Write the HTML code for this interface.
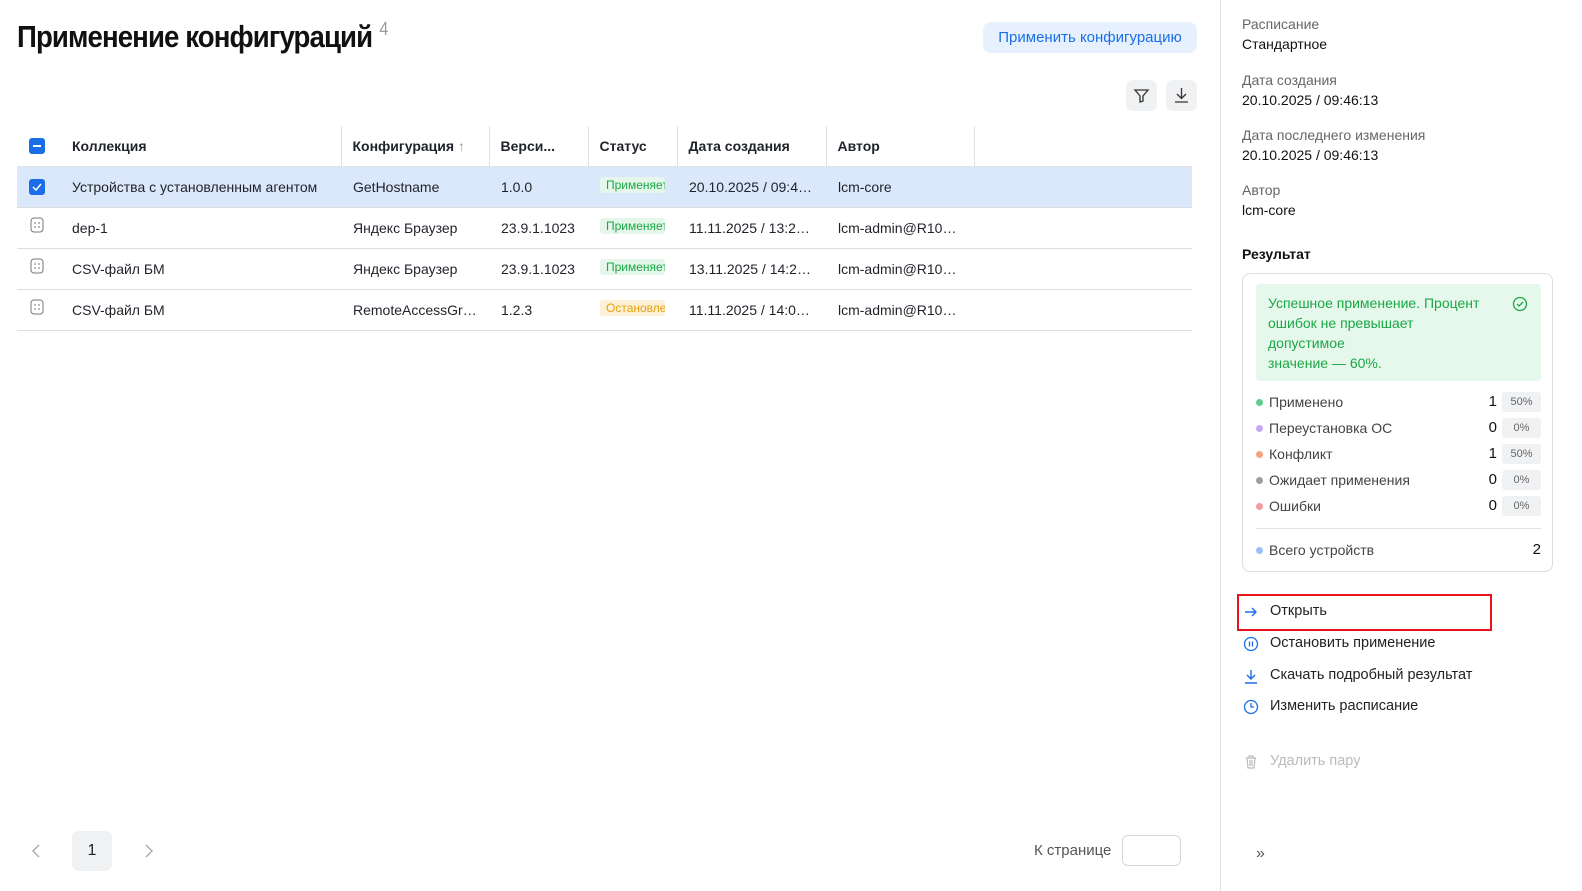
<!DOCTYPE html>
<html><head><meta charset="utf-8"><style>
*{box-sizing:border-box;margin:0;padding:0}
html{overflow:hidden;width:1582px;height:891px}
body{width:1582px;height:891px;overflow:hidden;background:#fff;font-family:"Liberation Sans","Noto Sans CJK SC",sans-serif;color:#1f2329;position:relative}
.abs{position:absolute}
h1{position:absolute;left:17px;top:19px;font-size:31px;font-weight:bold;letter-spacing:-1px;color:#111;transform:scaleX(0.89);transform-origin:left top;white-space:nowrap}
h1 sup{font-size:18px;color:#999;font-weight:normal;vertical-align:top;position:relative;top:0px;margin-left:8px}
.btn{position:absolute;left:983px;top:22px;width:214px;height:31px;background:#e7f1fd;border-radius:8px;color:#1a6ee8;font-size:15px;text-align:center;line-height:31px}
.ib{position:absolute;top:80px;width:31px;height:31px;background:#f0f1f3;border-radius:7px}
table{position:absolute;left:17px;top:126px;width:1175px;border-collapse:collapse;font-size:14px;table-layout:fixed}
td{height:41px;border-bottom:1px solid #dcdde0;white-space:nowrap;overflow:hidden;padding:0 0 0 12px}
tr.h td{height:40px;font-weight:bold;border-bottom:1px solid #e4e5e8}
tr.sel td{background:#dbe7fb}
.sep{border-left:1px solid #e0e0e0;padding-left:11px}
.cb{width:16px;height:16px;border-radius:3px;background:#1a6ee8;display:inline-block;vertical-align:middle;position:relative}
.tag{display:inline-block;width:65px;overflow:hidden;font-size:12px;padding:1px 0 1px 6px;border-radius:3px;white-space:nowrap}
.g{background:#e5f6ea;color:#1aa845}.o{background:#fdf1d8;color:#e5a10f}
.side{position:absolute;left:1220px;top:0;width:362px;height:891px;border-left:1px solid #e0e1e4}
.lab{position:absolute;left:21px;font-size:14px;color:#666}
.val{position:absolute;left:21px;font-size:14px;color:#111}
.card{position:absolute;left:21px;top:273px;width:311px;height:299px;border:1px solid #dcdde0;border-radius:8px}
.ok{position:absolute;left:13px;top:10px;width:285px;height:97px;background:#e6f7ec;border-radius:4px;color:#1aa845;font-size:14px;line-height:20px;padding:9px 12px;white-space:nowrap;overflow:hidden}
.row{position:absolute;left:13px;width:285px;height:20px;font-size:14px;color:#444;line-height:20px}
.row i{display:inline-block;width:7px;height:7px;border-radius:50%;margin-right:6px;vertical-align:1px}
.row b{position:absolute;right:44px;font-weight:normal;color:#111;font-size:15px}
.row em{position:absolute;right:0;top:0;width:39px;height:20px;background:#f0f1f3;border-radius:3px;font-style:normal;font-size:11px;text-align:center;color:#666}
.act{position:absolute;left:49px;font-size:14.5px;color:#222}
</style></head><body>
<h1>Применение конфигураций<sup>4</sup></h1>
<div class="btn">Применить конфигурацию</div>
<div class="ib" style="left:1126px"><svg width="31" height="31"><path d="M9 10h13l-5 6v5l-3 1v-6z" fill="none" stroke="#333" stroke-width="1.3"/></svg></div>
<div class="ib" style="left:1166px"><svg width="31" height="31"><path d="M15.5 8v10M11 14l4.5 4.5L20 14M9 22h13" fill="none" stroke="#333" stroke-width="1.3"/></svg></div>
<table>
<colgroup><col style="width:43px"><col style="width:281px"><col style="width:148px"><col style="width:99px"><col style="width:89px"><col style="width:149px"><col style="width:148px"><col></colgroup>
<tr class="h"><td><span class="cb"><span class="abs" style="left:4px;top:7px;width:8px;height:2px;background:#fff"></span></span></td><td>Коллекция</td><td class="sep">Конфигурация <span style="color:#999;font-weight:normal">↑</span></td><td class="sep">Верси...</td><td class="sep">Статус</td><td class="sep">Дата создания</td><td class="sep">Автор</td><td class="sep"></td></tr>
<tr class="sel"><td><span class="cb"><svg class="abs" style="left:0;top:0" width="16" height="16"><path d="M4 8l3 3 5-6" stroke="#fff" fill="none" stroke-width="1.5"/></svg></span></td><td>Устройства с установленным агентом</td><td>GetHostname</td><td>1.0.0</td><td><span class="tag g">Применяется</span></td><td>20.10.2025 / 09:4…</td><td>lcm-core</td><td></td></tr>
<tr><td><svg width="16" height="16" style="vertical-align:middle;margin-top:-8px"><rect x="2" y="1" width="12" height="14" rx="3" fill="none" stroke="#777"/><path d="M5 6h2M9 6h2M5 10h2M9 10h2" stroke="#777"/></svg></td><td>dep-1</td><td>Яндекс Браузер</td><td>23.9.1.1023</td><td><span class="tag g">Применяется</span></td><td>11.11.2025 / 13:2…</td><td>lcm-admin@R10…</td><td></td></tr>
<tr><td><svg width="16" height="16" style="vertical-align:middle;margin-top:-8px"><rect x="2" y="1" width="12" height="14" rx="3" fill="none" stroke="#777"/><path d="M5 6h2M9 6h2M5 10h2M9 10h2" stroke="#777"/></svg></td><td>CSV-файл БМ</td><td>Яндекс Браузер</td><td>23.9.1.1023</td><td><span class="tag g">Применяется</span></td><td>13.11.2025 / 14:2…</td><td>lcm-admin@R10…</td><td></td></tr>
<tr><td><svg width="16" height="16" style="vertical-align:middle;margin-top:-8px"><rect x="2" y="1" width="12" height="14" rx="3" fill="none" stroke="#777"/><path d="M5 6h2M9 6h2M5 10h2M9 10h2" stroke="#777"/></svg></td><td>CSV-файл БМ</td><td>RemoteAccessGr…</td><td>1.2.3</td><td><span class="tag o">Остановлено</span></td><td>11.11.2025 / 14:0…</td><td>lcm-admin@R10…</td><td></td></tr>
</table>
<svg class="abs" style="left:29px;top:843px" width="14" height="16"><path d="M10 2L4 8l6 6" fill="none" stroke="#aaa" stroke-width="1.4"/></svg>
<div class="abs" style="left:72px;top:831px;width:40px;height:40px;background:#f0f1f3;border-radius:7px;text-align:center;line-height:40px;font-size:16px">1</div>
<svg class="abs" style="left:142px;top:843px" width="14" height="16"><path d="M4 2l6 6-6 6" fill="none" stroke="#aaa" stroke-width="1.4"/></svg>
<div class="abs" style="left:1034px;top:842px;font-size:15px;color:#555">К странице</div>
<div class="abs" style="left:1122px;top:835px;width:59px;height:31px;border:1px solid #d5d6d9;border-radius:6px"></div>
<div class="side">
<div class="lab" style="top:16px">Расписание</div><div class="val" style="top:36px">Стандартное</div>
<div class="lab" style="top:72px">Дата создания</div><div class="val" style="top:92px">20.10.2025 / 09:46:13</div>
<div class="lab" style="top:127px">Дата последнего изменения</div><div class="val" style="top:147px">20.10.2025 / 09:46:13</div>
<div class="lab" style="top:182px">Автор</div><div class="val" style="top:202px">lcm-core</div>
<div class="val" style="top:246px;font-weight:bold">Результат</div>
<div class="card">
<div class="ok">Успешное применение. Процент<br>ошибок не превышает<br>допустимое<br>значение — 60%.<svg class="abs" style="right:13px;top:12px" width="16" height="16"><circle cx="8" cy="8" r="6.5" fill="none" stroke="#1aa845" stroke-width="1.3"/><path d="M5 8l2 2 4-4" fill="none" stroke="#1aa845" stroke-width="1.3"/></svg></div>
<div class="row" style="top:118px"><i style="background:#5cd08a"></i>Применено<b>1</b><em>50%</em></div>
<div class="row" style="top:144px"><i style="background:#c8a8f5"></i>Переустановка ОС<b>0</b><em>0%</em></div>
<div class="row" style="top:170px"><i style="background:#f8a27f"></i>Конфликт<b>1</b><em>50%</em></div>
<div class="row" style="top:196px"><i style="background:#9aa0a6"></i>Ожидает применения<b>0</b><em>0%</em></div>
<div class="row" style="top:222px"><i style="background:#f59a9a"></i>Ошибки<b>0</b><em>0%</em></div>
<div class="abs" style="left:13px;top:254px;width:285px;height:1px;background:#e0e1e4"></div>
<div class="row" style="top:266px"><i style="background:#9cc0f7"></i>Всего устройств<b style="right:0">2</b></div>
</div>
<div class="abs" style="left:16px;top:594px;width:255px;height:37px;border:2px solid #e8141a"></div>
<svg class="abs" style="left:22px;top:604px" width="16" height="16"><path d="M2 8h11M9 4l4 4-4 4" fill="none" stroke="#1a6ee8" stroke-width="1.4"/></svg>
<div class="act" style="top:603px">Открыть</div>
<svg class="abs" style="left:22px;top:636px" width="16" height="16"><circle cx="8" cy="8" r="6.5" fill="none" stroke="#1a6ee8" stroke-width="1.3"/><path d="M6.5 5.5v5M9.5 5.5v5" stroke="#1a6ee8" stroke-width="1.3"/></svg>
<div class="act" style="top:635px">Остановить применение</div>
<svg class="abs" style="left:22px;top:668px" width="16" height="16"><path d="M8 2v9M4 7l4 4 4-4M2 15h12" fill="none" stroke="#1a6ee8" stroke-width="1.4"/></svg>
<div class="act" style="top:667px">Скачать подробный результат</div>
<svg class="abs" style="left:22px;top:699px" width="16" height="16"><circle cx="8" cy="8" r="6.5" fill="none" stroke="#1a6ee8" stroke-width="1.3"/><path d="M8 4v4h3" fill="none" stroke="#1a6ee8" stroke-width="1.3"/></svg>
<div class="act" style="top:698px">Изменить расписание</div>
<svg class="abs" style="left:22px;top:754px" width="16" height="16"><path d="M3 4h10M6 4V2h4v2M4 4l1 10h6l1-10M7 6v6M9 6v6" fill="none" stroke="#bbb" stroke-width="1.2"/></svg>
<div class="act" style="top:753px;color:#bbb">Удалить пару</div>
<div class="abs" style="left:35px;top:845px;color:#555;font-size:16px">»</div>
</div>
</body></html>
